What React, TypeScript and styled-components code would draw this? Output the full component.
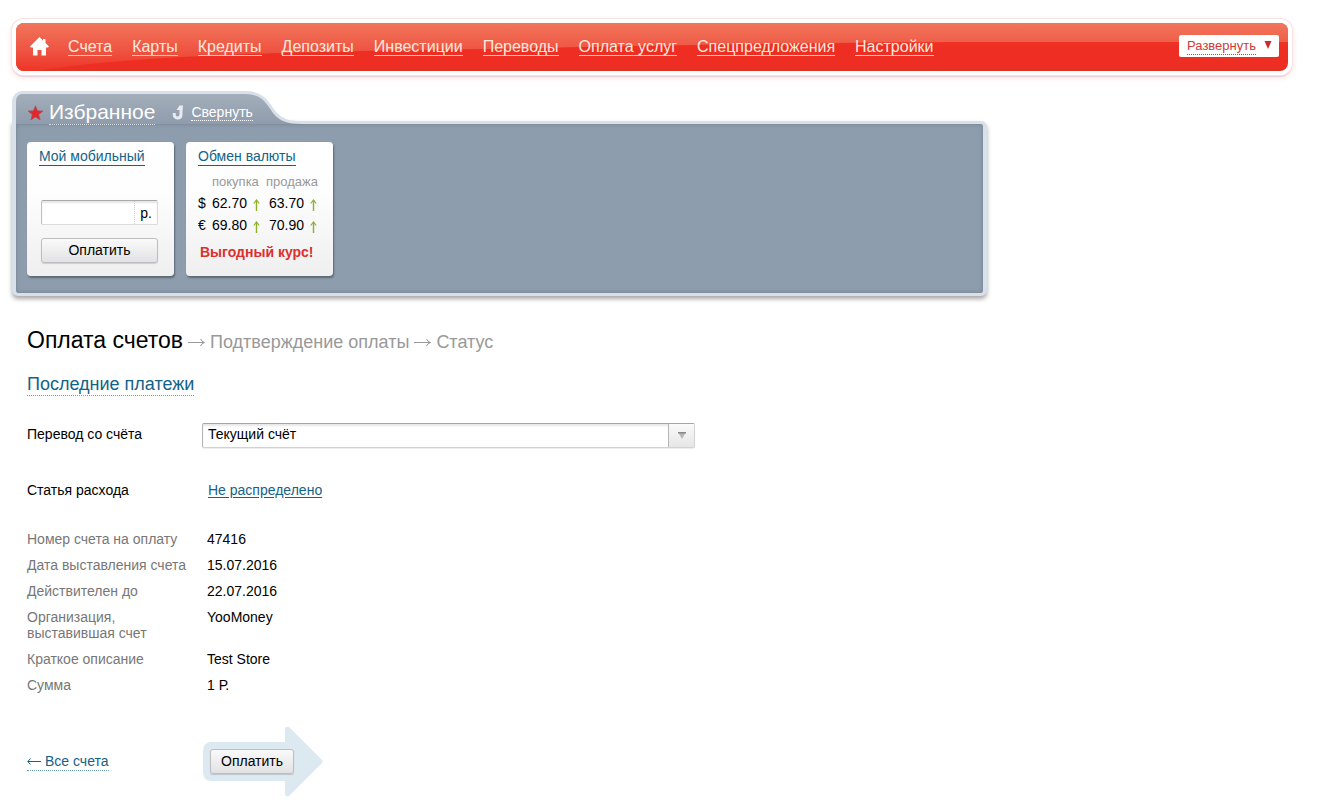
import React from 'react';
import styled, { createGlobalStyle } from 'styled-components';

const GlobalStyle = createGlobalStyle`
  * { box-sizing: border-box; }
  body {
    margin: 0;
    background: #fff;
    color: #000;
    font: 14px/16px "Liberation Sans", Arial, sans-serif;
  }
  button, input, select { font: inherit; color: inherit; }
  svg { flex: none; }
`;

const Page = styled.div`
  padding: 19px 26px 8px 12px;
`;

/* ---------- top navigation ---------- */

const NavFrame = styled.header`
  padding: 4px;
  border-radius: 12px;
  background: #fff;
  box-shadow: 0 0 0 1px #f8e2e2, 0 2px 0 #e9d3e0, 0 2px 5px 1px rgba(240, 110, 80, 0.2);
`;

const NavBar = styled.div`
  position: relative;
  display: flex;
  align-items: center;
  gap: 20px;
  min-height: 48px;
  padding: 0 9px 0 14px;
  border-radius: 8px;
  overflow: hidden;
  background: linear-gradient(#f0432f, #ee2e22 50%, #ee2e22 92%, #d93628);
`;

const Gloss = styled.svg`
  position: absolute;
  inset: 0;
  width: 100%;
  height: 100%;
`;

const HomeLink = styled.a`
  position: relative;
  display: flex;
  margin-right: -1px;
  padding-bottom: 2px;
`;

const NavLinks = styled.nav`
  position: relative;
  flex: 1;
  display: flex;
  flex-wrap: wrap;
  gap: 4px 20px;
`;

const NavLink = styled.a`
  font-size: 16px;
  line-height: 16px;
  color: #ffe9dd;
  text-decoration: none;
  border-bottom: 1px solid #fbc9b9;
`;

const ExpandButton = styled.button`
  position: relative;
  display: flex;
  align-items: center;
  gap: 8px;
  height: 22px;
  margin-bottom: 2px;
  padding: 0 7px 0 8px;
  border: 0;
  border-radius: 2px;
  background: #fff;
  color: #cf3a37;
  font-size: 13px;
`;

const Dotted = styled.span`
  line-height: 16px;
  border-bottom: 1px dotted currentColor;
`;

/* ---------- favourites ---------- */

const Favourites = styled.section`
  max-width: 975px;
  margin-top: 16px;
`;

const TabRow = styled.div`
  position: relative;
  display: flex;
  height: 33px;
  margin-bottom: -3px;
`;

const Tab = styled.div`
  display: flex;
  align-items: center;
  width: 228px;
  padding: 7px 0 0 11px;
  border: solid #d8e1ea;
  border-width: 3px 0 0 4px;
  border-radius: 10px 0 0 0;
  background: linear-gradient(#a4aebb, #8f9cac);
`;

const TabTitle = styled.a`
  margin: 0 17px 0 5px;
  font-size: 21px;
  line-height: 24px;
  color: #fff;
  text-decoration: none;
  white-space: nowrap;
  border-bottom: 1px dotted #d5dce4;
`;

const CollapseButton = styled.button`
  position: relative;
  display: flex;
  align-items: center;
  gap: 6px;
  padding: 0;
  border: 0;
  background: none;
  color: #fff;
  white-space: nowrap;
`;

const PanelBody = styled.div`
  display: flex;
  flex-wrap: wrap;
  gap: 12px;
  padding: 18px 11px 17px;
  border: solid #d8e1ea;
  border-width: 3px 4px;
  border-radius: 0 6px 6px 6px;
  background: #8e9dad;
  box-shadow: 0 3px 4px rgba(90, 80, 80, 0.5), inset 0 0 4px rgba(70, 80, 95, 0.4);
`;

const Card = styled.section`
  width: 147px;
  min-height: 134px;
  padding: 5px 12px 12px;
  border-radius: 4px;
  background: linear-gradient(#fff, #fdfdfd 40%, #efeff0);
  box-shadow: 1px 2px 2px rgba(50, 60, 70, 0.55);
`;

const CardTitle = styled.a`
  display: inline-block;
  line-height: 18px;
  color: #136288;
  text-decoration: none;
  white-space: nowrap;
  border-bottom: 1px solid #136288;
`;

const MobileForm = styled.form`
  display: flex;
  flex-direction: column;
  gap: 13px;
  margin: 34px 4px 0 2px;
`;

const AmountField = styled.label`
  display: flex;
  height: 25px;
  border: 1px solid #dcdcdc;
  border-top-color: #a9a9a9;
  border-left-color: #c0c0c0;
  border-radius: 2px;
  background: #fff;
  box-shadow: inset 0 2px 2px #e6e6e6;
`;

const AmountInput = styled.input`
  flex: 1;
  min-width: 0;
  padding: 0 4px;
  border: 0;
  border-right: 1px dotted #ccc;
  background: none;
`;

const Unit = styled.span`
  padding: 4px 5px 0;
`;

const GreyButton = styled.button<{ $wide?: boolean }>`
  width: ${(p) => (p.$wide ? '100%' : 'auto')};
  height: 25px;
  padding: 0 10px 1px;
  border: 1px solid #bdbdbf;
  border-radius: 3px;
  background: linear-gradient(#fafafa, #e2e2e4);
  box-shadow: 0 1px 1px rgba(0, 0, 0, 0.15);
`;

const Rates = styled.table`
  margin-top: 6px;
  border-collapse: collapse;
  th, td {
    height: 22px;
    padding: 0;
    text-align: left;
    font-weight: normal;
    white-space: nowrap;
  }
  thead th, thead td {
    height: 20px;
    font-size: 13px;
    color: #999;
  }
  tbody th { width: 14px; }
  td:nth-child(2) { width: 54px; }
  td:nth-child(3) { padding-left: 3px; }
`;

const Up = styled.svg`
  margin-left: 6px;
  vertical-align: -3px;
`;

const Promo = styled.p`
  margin: 8px 0 0 2px;
  font-weight: bold;
  color: #dc2f2b;
  white-space: nowrap;
`;

/* ---------- payment form ---------- */

const Main = styled.main`
  padding: 30px 15px 0;
`;

const Steps = styled.ol`
  display: flex;
  flex-wrap: wrap;
  align-items: baseline;
  gap: 5px;
  margin: 0;
  padding: 0;
  list-style: none;
  font-size: 18px;
  line-height: 28px;
  color: #999;
`;

const Step = styled.li`
  display: flex;
  align-items: baseline;
  gap: 5px;
`;

const StepTitle = styled.h1`
  margin: 0;
  font-size: 23px;
  font-weight: normal;
  color: #000;
`;

const DottedLink = styled.a<{ $large?: boolean }>`
  display: inline-flex;
  align-items: center;
  gap: 4px;
  font-size: ${(p) => (p.$large ? 18 : 14)}px;
  line-height: ${(p) => (p.$large ? 22 : 18)}px;
  color: #136288;
  text-decoration: none;
  border-bottom: 1px dotted #6f9db1;
`;

const Recent = styled.div`
  display: flex;
  margin-top: 17px;
`;

const Row = styled.div`
  display: grid;
  grid-template-columns: 175px minmax(0, 493px);
  align-items: center;
`;

const FieldLabel = styled.label`
  padding-bottom: 4px;
`;

const FormRows = styled.div`
  display: grid;
  gap: 34px;
  margin-top: 27px;
`;

const SelectBox = styled.div`
  display: flex;
  height: 25px;
  border: 1px solid #d2d2d2;
  border-top-color: #a5a5a5;
  border-left-color: #b5b5b5;
  border-radius: 2px;
  background: #fff;
  box-shadow: inset 0 2px 2px #e8e8e8, 0 1px 1px #eee;
`;

const AccountSelect = styled.select`
  flex: 1;
  min-width: 0;
  padding: 0 5px 3px;
  border: 0;
  appearance: none;
  background: none;
`;

const SelectArrow = styled.span`
  display: flex;
  align-items: center;
  justify-content: center;
  width: 26px;
  border-left: 1px solid #b5b5b5;
  background: linear-gradient(#fafafa, #e6e6e6);
  pointer-events: none;
`;

const CategoryLink = styled.a`
  justify-self: start;
  margin-left: 6px;
  color: #136288;
  text-underline-offset: 2px;
`;

const Details = styled.dl`
  display: grid;
  grid-template-columns: 170px 1fr;
  gap: 10px;
  margin: 33px 0 0;
  dt { color: #777; }
  dd { margin: 0; }
`;

const Actions = styled.div`
  display: grid;
  grid-template-columns: 176px auto;
  align-items: center;
  justify-content: start;
  margin-top: 33px;
`;

const ArrowBox = styled.div`
  position: relative;
  display: flex;
  align-items: center;
  width: 120px;
  height: 71px;
  padding-left: 7px;
`;

const ArrowShape = styled.svg`
  position: absolute;
  inset: 0;
`;

const ArrowContent = styled.div`
  position: relative;
`;

const navItems = [
  'Счета', 'Карты', 'Кредиты', 'Депозиты', 'Инвестиции', 'Переводы',
  'Оплата услуг', 'Спецпредложения', 'Настройки',
];

const rates = [
  { sign: '$', buy: '62.70', sell: '63.70' },
  { sign: '€', buy: '69.80', sell: '70.90' },
];

const details: [React.ReactNode, string][] = [
  ['Номер счета на оплату', '47416'],
  ['Дата выставления счета', '15.07.2016'],
  ['Действителен до', '22.07.2016'],
  [<>Организация,<br />выставившая счет</>, 'YooMoney'],
  ['Краткое описание', 'Test Store'],
  ['Сумма', '1 Р.'],
];

const UpArrow = () => (
  <Up width="7" height="12" viewBox="0 0 7 12" fill="none" stroke="#8fb02c" role="img" aria-label="рост">
    <path d="M3.500 12V1.500" strokeWidth="1.400" />
    <path d="M0.800 4.500L3.500 1L6.200 4.500" strokeWidth="1.200" />
  </Up>
);

const StepArrow = () => (
  <svg width="17" height="10" viewBox="0 0 17 10" fill="none" stroke="#999" aria-hidden="true">
    <path d="M0 4.500H16" />
    <path d="M12.500 1Q13.500 3.500 16.500 4.500Q13.500 5.500 12.500 8" />
  </svg>
);

export default function App() {
  return (
    <Page>
      <GlobalStyle />
      <NavFrame>
        <NavBar>
          <Gloss viewBox="0 0 1272 48" preserveAspectRatio="none" aria-hidden="true">
            <defs>
              <linearGradient id="gloss" x1="0" y1="0" x2="0" y2="1">
                <stop offset="0" stopColor="#f2765c" />
                <stop offset="0.6" stopColor="#ee5240" />
                <stop offset="1" stopColor="#ee3528" />
              </linearGradient>
            </defs>
            <path d="M0 0H1272V19H934C700 20 560 25 400 27C230 30 110 34 20 48H0Z" fill="url(#gloss)" />
          </Gloss>
          <HomeLink href="#" aria-label="Главная">
            <svg width="19" height="19" viewBox="0 0 19 19" fill="#fff">
              <path d="M9.500 0L13 3.500V2H15.500V6L19 9.500L18 10.500H16V18.500H11.500V13H7.500V18.500H3V10.500H1L0 9.500Z" />
            </svg>
          </HomeLink>
          <NavLinks>
            {navItems.map((t) => <NavLink href="#" key={t}>{t}</NavLink>)}
          </NavLinks>
          <ExpandButton type="button">
            <Dotted>Развернуть</Dotted>
            <svg width="8" height="10" viewBox="0 0 8 10" fill="#d02a2a"><path d="M0.500 0H7.500L4 8Z" /></svg>
          </ExpandButton>
        </NavBar>
      </NavFrame>

      <Favourites>
        <TabRow>
          <Tab>
            <svg width="17" height="16" viewBox="0 0 17 16">
              <path d="M8.500 0.800L10.500 5.800L16 6.100L11.700 9.500L13.200 15L8.500 11.900L3.800 15L5.300 9.500L1 6.100L6.500 5.800Z" fill="#e3262b" stroke="#a9545e" strokeWidth="0.800" />
            </svg>
            <TabTitle href="#">Избранное</TabTitle>
            <CollapseButton type="button">
              <svg width="13" height="15" viewBox="0 0 13 15">
                <path d="M9 3.500V9.500C9 12 7.500 13 5.500 13C3.500 13 2 11.500 2.200 8" fill="none" stroke="#e8ecf1" strokeWidth="3" />
                <path d="M4.500 5L7.500 0.500H11L10.500 5Z" fill="#e8ecf1" />
              </svg>
              <Dotted>Свернуть</Dotted>
            </CollapseButton>
          </Tab>
          <svg width="66" height="33" viewBox="0 0 66 33" aria-hidden="true">
            <defs>
              <linearGradient id="tab" x1="0" y1="3" x2="0" y2="33" gradientUnits="userSpaceOnUse">
                <stop offset="0" stopColor="#a4aebb" />
                <stop offset="1" stopColor="#8f9cac" />
              </linearGradient>
            </defs>
            <path d="M0 1.500H6C24 1.500 28 13 35 22C41 29 48 31.500 62 31.500H66V33H0Z" fill="url(#tab)" />
            <path d="M0 1.500H6C24 1.500 28 13 35 22C41 29 48 31.500 62 31.500H66" fill="none" stroke="#d8e1ea" strokeWidth="3" />
          </svg>
        </TabRow>
        <PanelBody>
          <Card>
            <CardTitle href="#">Мой мобильный</CardTitle>
            <MobileForm onSubmit={(e) => e.preventDefault()}>
              <AmountField>
                <AmountInput type="text" aria-label="Сумма" />
                <Unit>р.</Unit>
              </AmountField>
              <GreyButton type="submit" $wide>Оплатить</GreyButton>
            </MobileForm>
          </Card>
          <Card>
            <CardTitle href="#">Обмен валюты</CardTitle>
            <Rates>
              <thead>
                <tr><td /><th scope="col">покупка</th><th scope="col">продажа</th></tr>
              </thead>
              <tbody>
                {rates.map((r) => (
                  <tr key={r.sign}>
                    <th scope="row">{r.sign}</th>
                    <td>{r.buy}<UpArrow /></td>
                    <td>{r.sell}<UpArrow /></td>
                  </tr>
                ))}
              </tbody>
            </Rates>
            <Promo>Выгодный курс!</Promo>
          </Card>
        </PanelBody>
      </Favourites>

      <Main>
        <Steps>
          <Step><StepTitle>Оплата счетов</StepTitle></Step>
          <Step><StepArrow />Подтверждение оплаты</Step>
          <Step><StepArrow />Статус</Step>
        </Steps>
        <Recent><DottedLink href="#" $large>Последние платежи</DottedLink></Recent>
        <FormRows>
          <Row>
            <FieldLabel htmlFor="account">Перевод со счёта</FieldLabel>
            <SelectBox>
              <AccountSelect id="account"><option>Текущий счёт</option></AccountSelect>
              <SelectArrow>
                <svg width="8" height="7" viewBox="0 0 8 7"><path d="M0 0H8L4 7Z" fill="#b5b5b5" /><path d="M0 0H8V1.500H0Z" fill="#888" /></svg>
              </SelectArrow>
            </SelectBox>
          </Row>
          <Row>
            <span>Статья расхода</span>
            <CategoryLink href="#">Не распределено</CategoryLink>
          </Row>
        </FormRows>
        <Details>
          {details.map(([label, value]) => (
            <React.Fragment key={value}>
              <dt>{label}</dt>
              <dd>{value}</dd>
            </React.Fragment>
          ))}
        </Details>
        <Actions>
          <div>
            <DottedLink href="#">
              <svg width="14" height="7" viewBox="0 0 14 7" fill="none" stroke="#136288" aria-hidden="true">
                <path d="M1 3.500H14" />
                <path d="M3.500 0.500L0.800 3.500L3.500 6.500" />
              </svg>
              Все счета
            </DottedLink>
          </div>
          <ArrowBox>
            <ArrowShape width="120" height="71" viewBox="0 0 120 71" aria-hidden="true">
              <path d="M9 16H82V3Q82 0 86 1L119 34Q120.500 35.500 119 37L86 70Q82 71.500 82 68V55H9Q0 55 0 46V25Q0 16 9 16Z" fill="#dce9f0" />
            </ArrowShape>
            <ArrowContent><GreyButton type="button">Оплатить</GreyButton></ArrowContent>
          </ArrowBox>
        </Actions>
      </Main>
    </Page>
  );
}
